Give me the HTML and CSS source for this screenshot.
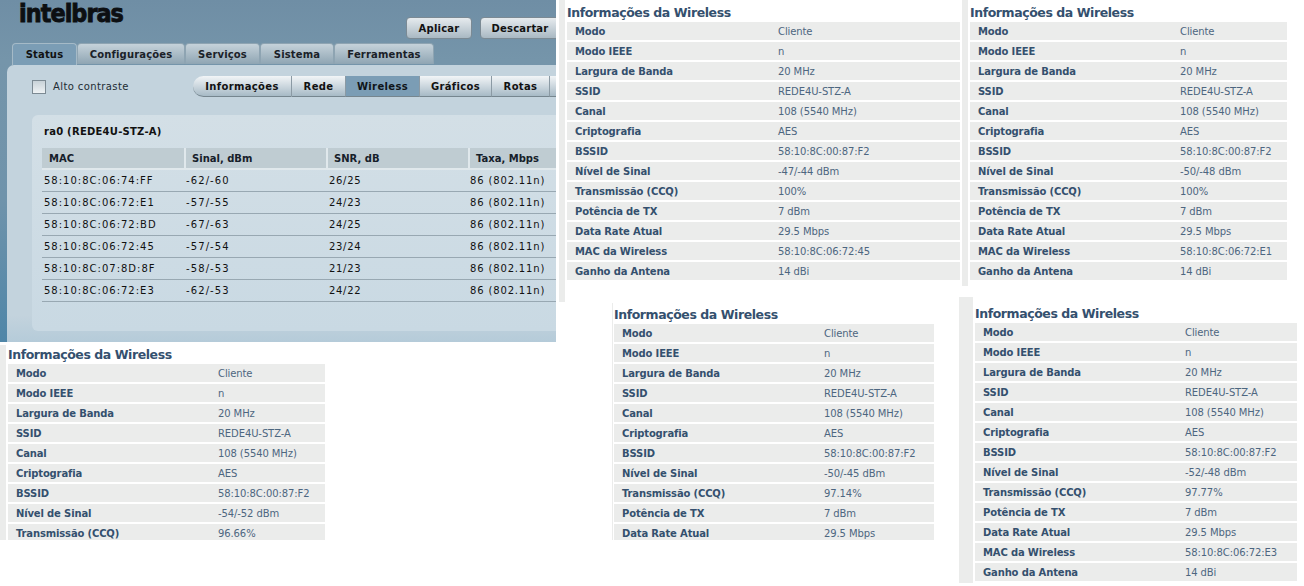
FILE: index.html
```html
<!DOCTYPE html>
<html lang="pt">
<head>
<meta charset="utf-8">
<title>Informações da Wireless</title>
<link rel="stylesheet" href="styles.css">
</head>
<body>
<section class="admin">
  <header class="admin-top">
    <div class="logo">intelbras</div>
    <div class="actions"><button class="act">Aplicar</button><button class="act">Descartar</button></div>
  </header>
  <nav class="tabs">
    <span class="tab on">Status</span><span class="tab">Configurações</span><span class="tab">Serviços</span><span class="tab">Sistema</span><span class="tab">Ferramentas</span>
  </nav>
  <div class="body">
    <div class="toolbar">
      <label class="contrast"><span class="check"></span>Alto contraste</label>
      <div class="pills">
        <span class="pill first">Informações</span><span class="pill">Rede</span><span class="pill sel">Wireless</span><span class="pill">Gráficos</span><span class="pill">Rotas</span><span class="pill stub"></span>
      </div>
    </div>
    <div class="card">
      <h2 class="card-title">ra0 (REDE4U-STZ-A)</h2>
      <table class="stations">
        <thead><tr><th>MAC</th><th>Sinal, dBm</th><th>SNR, dB</th><th>Taxa, Mbps</th></tr></thead>
        <tbody>
          <tr><td>58:10:8C:06:74:FF</td><td>-62/-60</td><td>26/25</td><td>86 (802.11n)</td></tr>
          <tr><td>58:10:8C:06:72:E1</td><td>-57/-55</td><td>24/23</td><td>86 (802.11n)</td></tr>
          <tr><td>58:10:8C:06:72:BD</td><td>-67/-63</td><td>24/25</td><td>86 (802.11n)</td></tr>
          <tr><td>58:10:8C:06:72:45</td><td>-57/-54</td><td>23/24</td><td>86 (802.11n)</td></tr>
          <tr><td>58:10:8C:07:8D:8F</td><td>-58/-53</td><td>21/23</td><td>86 (802.11n)</td></tr>
          <tr><td>58:10:8C:06:72:E3</td><td>-62/-53</td><td>24/22</td><td>86 (802.11n)</td></tr>
        </tbody>
      </table>
    </div>
  </div>
</section>

<section class="info p-tr1">
  <h2>Informações da Wireless</h2>
  <dl>
    <div><dt>Modo</dt><dd>Cliente</dd></div>
    <div><dt>Modo IEEE</dt><dd>n</dd></div>
    <div><dt>Largura de Banda</dt><dd>20 MHz</dd></div>
    <div><dt>SSID</dt><dd>REDE4U-STZ-A</dd></div>
    <div><dt>Canal</dt><dd>108 (5540 MHz)</dd></div>
    <div><dt>Criptografia</dt><dd>AES</dd></div>
    <div><dt>BSSID</dt><dd>58:10:8C:00:87:F2</dd></div>
    <div><dt>Nível de Sinal</dt><dd>-47/-44 dBm</dd></div>
    <div><dt>Transmissão (CCQ)</dt><dd>100%</dd></div>
    <div><dt>Potência de TX</dt><dd>7 dBm</dd></div>
    <div><dt>Data Rate Atual</dt><dd>29.5 Mbps</dd></div>
    <div><dt>MAC da Wireless</dt><dd>58:10:8C:06:72:45</dd></div>
    <div><dt>Ganho da Antena</dt><dd>14 dBi</dd></div>
  </dl>
</section>

<section class="info p-tr2">
  <h2>Informações da Wireless</h2>
  <dl>
    <div><dt>Modo</dt><dd>Cliente</dd></div>
    <div><dt>Modo IEEE</dt><dd>n</dd></div>
    <div><dt>Largura de Banda</dt><dd>20 MHz</dd></div>
    <div><dt>SSID</dt><dd>REDE4U-STZ-A</dd></div>
    <div><dt>Canal</dt><dd>108 (5540 MHz)</dd></div>
    <div><dt>Criptografia</dt><dd>AES</dd></div>
    <div><dt>BSSID</dt><dd>58:10:8C:00:87:F2</dd></div>
    <div><dt>Nível de Sinal</dt><dd>-50/-48 dBm</dd></div>
    <div><dt>Transmissão (CCQ)</dt><dd>100%</dd></div>
    <div><dt>Potência de TX</dt><dd>7 dBm</dd></div>
    <div><dt>Data Rate Atual</dt><dd>29.5 Mbps</dd></div>
    <div><dt>MAC da Wireless</dt><dd>58:10:8C:06:72:E1</dd></div>
    <div><dt>Ganho da Antena</dt><dd>14 dBi</dd></div>
  </dl>
</section>

<section class="info p-bl">
  <h2>Informações da Wireless</h2>
  <dl>
    <div><dt>Modo</dt><dd>Cliente</dd></div>
    <div><dt>Modo IEEE</dt><dd>n</dd></div>
    <div><dt>Largura de Banda</dt><dd>20 MHz</dd></div>
    <div><dt>SSID</dt><dd>REDE4U-STZ-A</dd></div>
    <div><dt>Canal</dt><dd>108 (5540 MHz)</dd></div>
    <div><dt>Criptografia</dt><dd>AES</dd></div>
    <div><dt>BSSID</dt><dd>58:10:8C:00:87:F2</dd></div>
    <div><dt>Nível de Sinal</dt><dd>-54/-52 dBm</dd></div>
    <div><dt>Transmissão (CCQ)</dt><dd>96.66%</dd></div>
  </dl>
</section>

<section class="info p-bm">
  <h2>Informações da Wireless</h2>
  <dl>
    <div><dt>Modo</dt><dd>Cliente</dd></div>
    <div><dt>Modo IEEE</dt><dd>n</dd></div>
    <div><dt>Largura de Banda</dt><dd>20 MHz</dd></div>
    <div><dt>SSID</dt><dd>REDE4U-STZ-A</dd></div>
    <div><dt>Canal</dt><dd>108 (5540 MHz)</dd></div>
    <div><dt>Criptografia</dt><dd>AES</dd></div>
    <div><dt>BSSID</dt><dd>58:10:8C:00:87:F2</dd></div>
    <div><dt>Nível de Sinal</dt><dd>-50/-45 dBm</dd></div>
    <div><dt>Transmissão (CCQ)</dt><dd>97.14%</dd></div>
    <div><dt>Potência de TX</dt><dd>7 dBm</dd></div>
    <div><dt>Data Rate Atual</dt><dd>29.5 Mbps</dd></div>
  </dl>
</section>

<section class="info p-br">
  <h2>Informações da Wireless</h2>
  <dl>
    <div><dt>Modo</dt><dd>Cliente</dd></div>
    <div><dt>Modo IEEE</dt><dd>n</dd></div>
    <div><dt>Largura de Banda</dt><dd>20 MHz</dd></div>
    <div><dt>SSID</dt><dd>REDE4U-STZ-A</dd></div>
    <div><dt>Canal</dt><dd>108 (5540 MHz)</dd></div>
    <div><dt>Criptografia</dt><dd>AES</dd></div>
    <div><dt>BSSID</dt><dd>58:10:8C:00:87:F2</dd></div>
    <div><dt>Nível de Sinal</dt><dd>-52/-48 dBm</dd></div>
    <div><dt>Transmissão (CCQ)</dt><dd>97.77%</dd></div>
    <div><dt>Potência de TX</dt><dd>7 dBm</dd></div>
    <div><dt>Data Rate Atual</dt><dd>29.5 Mbps</dd></div>
    <div><dt>MAC da Wireless</dt><dd>58:10:8C:06:72:E3</dd></div>
    <div><dt>Ganho da Antena</dt><dd>14 dBi</dd></div>
  </dl>
</section>
</body>
</html>
```

FILE: styles.css
```css
* { box-sizing: border-box; }
html, body { margin: 0; padding: 0; }
body { position: relative; width: 1304px; height: 586px; overflow: hidden; background: #fff; font-family: "DejaVu Sans", sans-serif; }

/* Collage pieces: each one is a separate screenshot on a free canvas */
.admin { position: absolute; left: 0; top: 0; width: 556px; height: 342px; overflow: hidden; background: linear-gradient(180deg, #6f8ea5 0, #7595aa 60px, #6f93ab 200px, #4f86a8 342px); }
.info { position: absolute; overflow: hidden; background: #fff; }
.p-tr1 { left: 559px; top: 0; width: 401px; height: 302px; padding-left: 2px; border-left: 6px solid #ebeceb; }
.p-tr2 { left: 962px; top: 0; width: 325px; height: 286px; padding-left: 2px; border-left: 6px solid #ebeceb; }
.p-bl { left: 0; top: 345px; width: 325px; height: 195px; padding-left: 2px; border-left: 6px solid #ebeceb; }
.p-bm { left: 612px; top: 303px; width: 322px; height: 237px; padding-left: 1px; border-left: 1px solid #ebeceb; }
.p-br { left: 959px; top: 297px; width: 338px; height: 286px; padding-left: 2px; border-left: 14px solid #ebeceb; }

.info h2 { margin: 0; height: 19px; font: bold 12.5px/19px "DejaVu Sans", sans-serif; color: #34506e; white-space: nowrap; letter-spacing: -.43px; }
.p-tr1 h2, .p-tr2 h2 { margin-top: 3px; }
.p-bl h2 { margin-top: 0; }
.p-bm h2 { margin-top: 2px; }
.p-br h2 { margin-top: 7px; }
.info dl { margin: 0; display: flex; flex-direction: column; gap: 2px; }
.info dl > div { display: flex; height: 18px; padding-left: 8px; background: #ebeceb; align-items: center; font-size: 10px; }
.info dt { width: 202px; font-weight: bold; color: #34506e; white-space: nowrap; letter-spacing: -.15px; }
.p-tr1 dt { width: 203px; }
.info dd { margin: 0; color: #4d6680; white-space: nowrap; letter-spacing: -.1px; }

/* Admin panel */
.admin-top { position: relative; height: 43px; }
.logo { position: absolute; left: 19px; top: 0; font: bold 24px/28px "DejaVu Sans", sans-serif; color: #0c0f12; letter-spacing: -1px; -webkit-text-stroke: .9px #0c0f12; transform: scaleX(.93); transform-origin: left top; }
.actions { position: absolute; left: 406px; top: 17px; display: flex; gap: 8px; }
.act { width: 66px; height: 22px; padding: 0; border: 1px solid #7b8a94; border-radius: 4px; background: linear-gradient(180deg, #e6ebee, #a9b9c3); font: bold 10px "DejaVu Sans", sans-serif; color: #111; letter-spacing: .2px; }
.act + .act { width: 80px; }

.tabs { display: flex; height: 22px; margin-left: 12px; }
.tab { display: flex; align-items: center; justify-content: center; height: 21px; border: 1px solid #8ea4b2; border-bottom: 0; border-radius: 4px 4px 0 0; background: linear-gradient(180deg, #c5d2da, #8fa5b3); font-size: 10px; font-weight: bold; color: #1a2128; letter-spacing: .15px; width: 75px; }
.tab:nth-child(2) { width: 108px; }
.tab:nth-child(3) { width: 75px; }
.tab:nth-child(4) { width: 74px; }
.tab:nth-child(5) { width: 100px; }
.tab.on { width: 65px; height: 22px; background: #7b9db5; border-color: #a5bac7; color: #111; }

.body { margin-left: 7px; height: 290px; background: linear-gradient(180deg, #c3d3dd, #c3d3dd 250px, #b5cbd9 277px); border-radius: 7px 0 0 0; padding: 11px 0 0 25px; overflow: hidden; }
.toolbar { display: flex; align-items: center; height: 21px; }
.contrast { display: flex; flex: none; align-items: center; gap: 7px; width: 161px; font-size: 10px; color: #222c33; letter-spacing: .4px; }
.check { width: 14px; height: 14px; background: linear-gradient(180deg, #c8d2d8, #eef2f4); border: 1px solid #7c8a93; }
.pills { display: flex; flex: none; height: 21px; }
.pill { display: flex; flex: none; align-items: center; justify-content: center; height: 21px; background: linear-gradient(180deg, #f2f5f7, #a7bac6); border-right: 1px solid #8b9aa4; border-bottom: 1px solid #76868f; font-size: 10px; font-weight: bold; color: #111; letter-spacing: .35px; }
.pill.first { width: 99px; border-radius: 11px 0 0 11px; }
.pill:nth-child(2) { width: 54px; }
.pill.sel { width: 74px; background: #7b9db5; color: #0f1519; }
.pill:nth-child(4) { width: 72px; }
.pill:nth-child(5) { width: 58px; }
.pill.stub { width: 10px; border-right: 0; }

.card { margin-top: 18px; height: 216px; background: linear-gradient(180deg, #d3dfe6, #c9d9e3); border-radius: 6px 0 0 6px; padding: 9px 0 0 10px; }
.card-title { margin: 0 0 9px 2px; font: bold 10px/15px "DejaVu Sans", sans-serif; color: #111; letter-spacing: .25px; }
.stations { width: 514px; border-collapse: collapse; table-layout: fixed; font-size: 10px; color: #111; }
.stations th { height: 21px; padding: 0 0 0 6px; background: #bfccd2; border-right: 2px solid #e0e8ec; border-bottom: 2px solid #e0e8ec; text-align: left; font-weight: bold; color: #16202a; letter-spacing: 0; }
.stations th:first-child { width: 143px; padding-left: 7px; }
.stations th:nth-child(2) { width: 142px; }
.stations th:nth-child(3) { width: 142px; }
.stations th:last-child { border-right: 0; }
.stations td { height: 22px; padding: 0 0 0 1px; border-bottom: 1px solid #98a8b2; letter-spacing: .85px; white-space: nowrap; }
.stations td:first-child { padding-left: 2px; letter-spacing: 1px; }
.stations td:nth-child(2) { letter-spacing: 1.1px; }
.stations td:nth-child(3) { padding-left: 2px; letter-spacing: .7px; }
```
